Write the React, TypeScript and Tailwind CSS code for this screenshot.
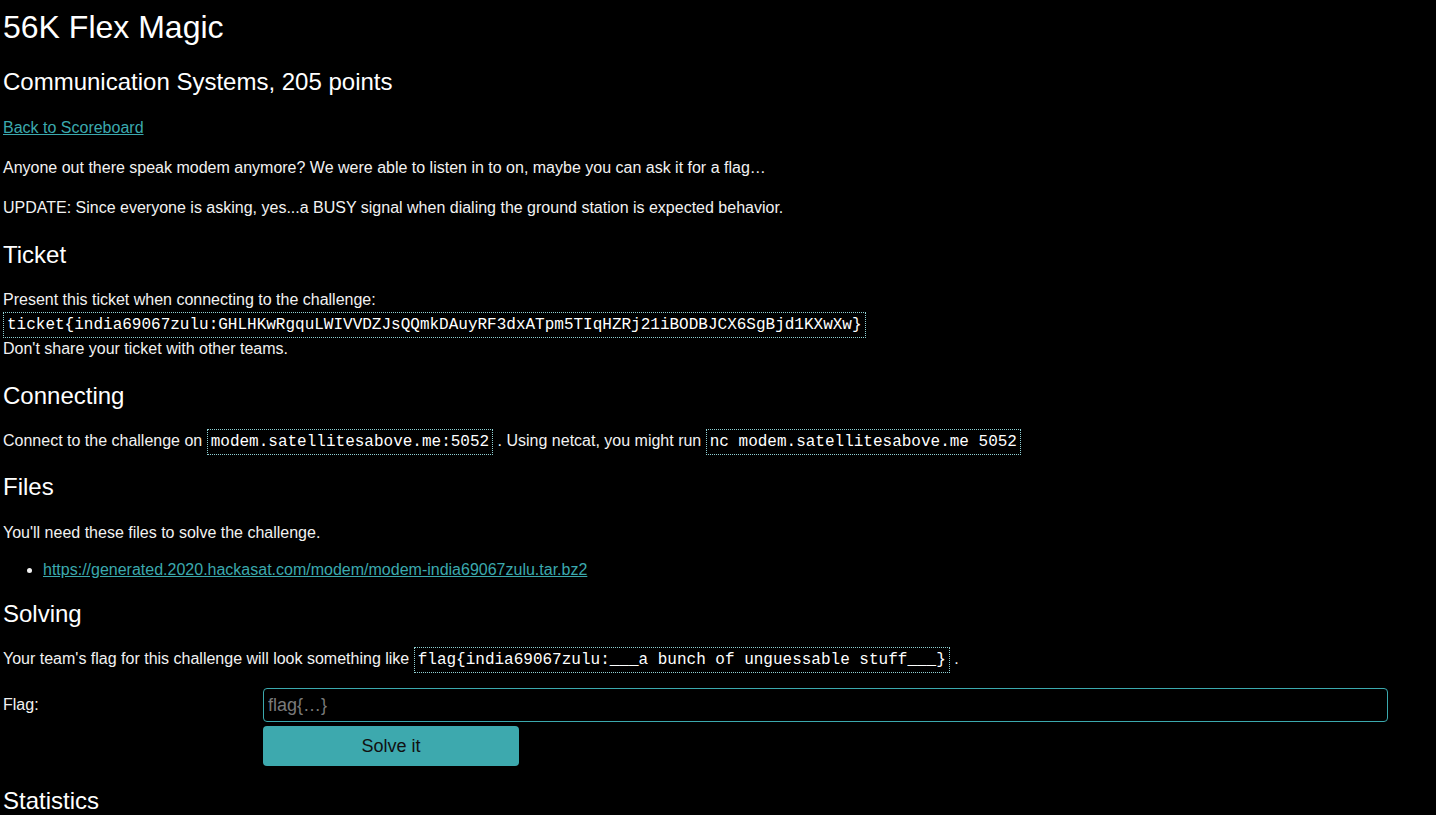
import React from 'react';

const teal = 'text-[#3ba9ae]';

function Code({ children }: { children: React.ReactNode }) {
  return (
    <code className="border border-dotted border-[#8fd0d3] px-[3px] py-[3px] font-['Liberation_Mono',monospace] text-[16px] leading-none text-white">
      {children}
    </code>
  );
}

function H2({ children, className = '' }: { children: React.ReactNode; className?: string }) {
  return <h2 className={`text-[24px] leading-[1.2] font-normal text-white ${className}`}>{children}</h2>;
}

export default function App() {
  return (
    <div className="min-h-screen bg-black px-[3px] pt-[8px] font-['Liberation_Sans',Arial,sans-serif] text-[16px] leading-6 text-[#f2f2f2]">
      <h1 className="text-[32px] leading-[1.2] font-normal text-white">56K Flex Magic</h1>
      <H2 className="mt-[22px]">Communication Systems, 205 points</H2>

      <p className="mt-[19px]">
        <a href="#" className={`${teal} underline`}>
          Back to Scoreboard
        </a>
      </p>
      <p className="mt-4">
        Anyone out there speak modem anymore? We were able to listen in to on, maybe you can ask it for a flag…
      </p>
      <p className="mt-4">
        UPDATE: Since everyone is asking, yes...a BUSY signal when dialing the ground station is expected behavior.
      </p>

      <H2 className="mt-[21px]">Ticket</H2>
      <div className="mt-[18px]">
        <div>Present this ticket when connecting to the challenge:</div>
        <div className="h-[25px]">
          <Code>ticket{'{'}india69067zulu:GHLHKwRgquLWIVVDZJsQQmkDAuyRF3dxATpm5TIqHZRj21iBODBJCX6SgBjd1KXwXw{'}'}</Code>
        </div>
        <div>Don't share your ticket with other teams.</div>
      </div>

      <H2 className="mt-[21px]">Connecting</H2>
      <p className="mt-[18px]">
        Connect to the challenge on <Code>modem.satellitesabove.me:5052</Code> . Using netcat, you might run{' '}
        <Code>nc modem.satellitesabove.me 5052</Code>
      </p>

      <H2 className="mt-5">Files</H2>
      <p className="mt-[19px]">You'll need these files to solve the challenge.</p>
      <ul className="mt-[13px] list-disc pl-10">
        <li>
          <a href="#" className={`${teal} underline`}>
            https://generated.2020.hackasat.com/modem/modem-india69067zulu.tar.bz2
          </a>
        </li>
      </ul>

      <H2 className="mt-[18px]">Solving</H2>
      <p className="mt-[19px]">
        Your team's flag for this challenge will look something like{' '}
        <Code>flag{'{'}india69067zulu:___a bunch of unguessable stuff___{'}'}</Code> .
      </p>

      <form className="mt-[17px] grid grid-cols-[260px_1125px] gap-y-[4px]" onSubmit={(e) => e.preventDefault()}>
        <label className="self-center">Flag:</label>
        <input
          placeholder="flag{…}"
          className="h-[34px] rounded-[4px] border border-[#3ba9ae] bg-black px-[4px] text-[18px] text-white placeholder:text-[#7a7a7a] outline-none"
        />
        <div />
        <button
          type="submit"
          className="h-[40px] w-[256px] rounded-[4px] bg-[#3da9ae] text-[18px] text-[#111]"
        >
          Solve it
        </button>
      </form>

      <H2 className="mt-[21px] pb-4">Statistics</H2>
    </div>
  );
}
